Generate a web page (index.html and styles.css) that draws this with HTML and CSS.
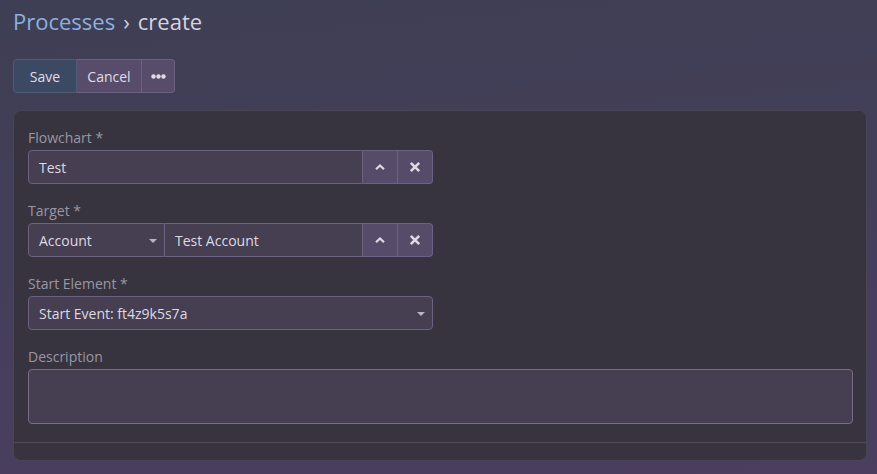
FILE: index.html
```html
<!DOCTYPE html>
<html>
<head>
<meta charset="utf-8">
<link rel="stylesheet" href="styles.css">
</head>
<body>
<div class="page">
  <div class="header">
    <a class="crumb-link">Processes</a><span class="sep">›</span><span class="crumb">create</span>
  </div>
  <div class="btn-group">
    <button class="btn btn-primary">Save</button>
    <button class="btn">Cancel</button>
    <button class="btn btn-dots"><svg width="15" height="5" viewBox="0 0 15 5"><circle cx="2.5" cy="2.5" r="2.2" fill="#e0dce6"/><circle cx="7.5" cy="2.5" r="2.2" fill="#e0dce6"/><circle cx="12.5" cy="2.5" r="2.2" fill="#e0dce6"/></svg></button>
  </div>
  <div class="panel">
    <div class="panel-body">
      <div class="field">
        <label class="label">Flowchart *</label>
        <div class="input-group">
          <div class="input grow">Test</div>
          <button class="addon"><svg width="12" height="8" viewBox="0 0 12 8"><path d="M2 6.2 L6 2.4 L10 6.2" fill="none" stroke="#ddd8e4" stroke-width="2.2"/></svg></button>
          <button class="addon last"><svg width="12" height="12" viewBox="0 0 12 12"><path d="M1.8 1.8 L10.2 10.2 M10.2 1.8 L1.8 10.2" stroke="#ddd8e4" stroke-width="2.6"/></svg></button>
        </div>
      </div>
      <div class="field">
        <label class="label">Target *</label>
        <div class="input-group">
          <div class="input select small">Account<span class="caret"></span></div>
          <div class="input grow mid">Test Account</div>
          <button class="addon"><svg width="12" height="8" viewBox="0 0 12 8"><path d="M2 6.2 L6 2.4 L10 6.2" fill="none" stroke="#ddd8e4" stroke-width="2.2"/></svg></button>
          <button class="addon last"><svg width="12" height="12" viewBox="0 0 12 12"><path d="M1.8 1.8 L10.2 10.2 M10.2 1.8 L1.8 10.2" stroke="#ddd8e4" stroke-width="2.6"/></svg></button>
        </div>
      </div>
      <div class="field">
        <label class="label">Start Element *</label>
        <div class="input-group">
          <div class="input select grow single">Start Event: ft4z9k5s7a<span class="caret"></span></div>
        </div>
      </div>
      <div class="field wide">
        <label class="label">Description</label>
        <div class="textarea"></div>
      </div>
    </div>
    <div class="panel-footer"></div>
  </div>
</div>
</body>
</html>
```
FILE: styles.css
```css
html, body {
  margin: 0;
  padding: 0;
  height: 100%;
}
body {
  background: linear-gradient(175deg, #3e3e54 0%, #443f59 50%, #4b3e5f 100%);
  font-family: "Open Sans", "Noto Sans", sans-serif;
  color: #dcd8e2;
  width: 877px;
  height: 474px;
  overflow: hidden;
}
.page {
  padding: 5px 10px 0 13px;
}
.header {
  font-size: 22px;
  line-height: 32px;
  height: 32px;
  display: flex;
  align-items: center;
}
.crumb-link {
  color: #8db0df;
}
.sep {
  color: #d4d0da;
  margin: 0 8px 0 8px;
}
.crumb {
  color: #d8d4de;
}
.btn-group {
  display: flex;
  margin-top: 22px;
  height: 34px;
}
.btn {
  font-family: "Open Sans", "Noto Sans", sans-serif;
  font-size: 14px;
  color: #e0dce6;
  background: #574c69;
  border: 1px solid #6e6283;
  border-left: none;
  height: 34px;
  padding: 0 10px;
  margin: 0;
  display: flex;
  align-items: center;
  justify-content: center;
}
.btn-primary {
  background: #3c4962;
  border: 1px solid #4f5b77;
  border-radius: 4px 0 0 4px;
  width: 64px;
}
.btn:nth-child(2) {
  width: 65px;
}
.btn-dots {
  width: 33px;
  border-radius: 0 4px 4px 0;
  padding: 0;
}
.panel {
  margin-top: 17px;
  width: 854px;
  height: 351px;
  box-sizing: border-box;
  background: #37333f;
  border: 1px solid #4a4458;
  border-radius: 8px;
  display: flex;
  flex-direction: column;
}
.panel-body {
  padding: 16px 14px 0 14px;
  height: 332px;
  box-sizing: border-box;
  border-bottom: 1px solid #52495c;
}
.field {
  width: 405px;
  margin-bottom: 16px;
}
.field.wide {
  width: 825px;
}
.label {
  display: block;
  font-size: 14px;
  color: #9a97a2;
  line-height: 22px;
  height: 21px;
  margin-bottom: 2px;
}
.input-group {
  display: flex;
  height: 34px;
}
.input {
  box-sizing: border-box;
  height: 34px;
  background: #463f51;
  border: 1px solid #6d6280;
  font-size: 14px;
  color: #ddd9e3;
  display: flex;
  align-items: center;
  padding: 0 10px;
  position: relative;
}
.grow {
  flex: 1;
  border-radius: 4px 0 0 4px;
}
.grow.mid {
  border-radius: 0;
  border-left: none;
}
.grow.single {
  border-radius: 4px;
}
.small {
  width: 137px;
  border-radius: 4px 0 0 4px;
}
.caret {
  position: absolute;
  right: 7px;
  top: 15px;
  width: 0;
  height: 0;
  border-left: 4px solid transparent;
  border-right: 4px solid transparent;
  border-top: 4px solid #b9b4c0;
}
.addon {
  box-sizing: border-box;
  width: 35px;
  height: 34px;
  margin: 0;
  padding: 0;
  background: #564b68;
  border: 1px solid #6d6280;
  border-left: none;
  display: flex;
  align-items: center;
  justify-content: center;
}
.addon.last {
  border-radius: 0 4px 4px 0;
}
.textarea {
  box-sizing: border-box;
  height: 55px;
  background: #463f51;
  border: 1px solid #786d89;
  border-radius: 4px;
}
.panel-footer {
  flex: 1;
}
```
